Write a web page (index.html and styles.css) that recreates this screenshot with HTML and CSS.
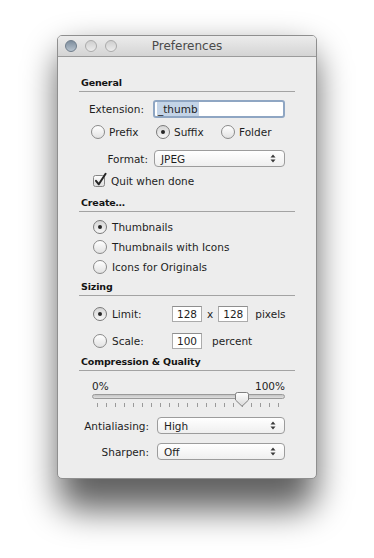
FILE: index.html
```html
<!DOCTYPE html>
<html lang="en">
<head>
  <meta charset="UTF-8" />
  <meta name="viewport" content="width=device-width, initial-scale=1.0"/>
  <title>Preferences</title>
  <link rel="stylesheet" href="styles.css">
</head>
<body>
  <div class="window">
    <div class="titlebar">
      <div class="lights">
        <span class="light close"></span>
        <span class="light"></span>
        <span class="light"></span>
      </div>
      <div class="title">Preferences</div>
      <div></div>
    </div>

    <div class="content">
      <div class="section-head">General</div>

      <div class="row row-ext">
        <span class="lbl lbl-ext">Extension:</span>
        <div class="field focused"><span class="sel">_thumb</span></div>
      </div>

      <div class="row row-radios">
        <span class="opt"><span class="radio"></span>Prefix</span>
        <span class="opt"><span class="radio on"></span>Suffix</span>
        <span class="opt"><span class="radio"></span>Folder</span>
      </div>

      <div class="row row-format">
        <span class="lbl lbl-format">Format:</span>
        <div class="popup popup-format">
          <span>JPEG</span>
          <svg class="arrows" width="6" height="9" viewBox="0 0 6 9"><path d="M0.5 3.6 L3 0.6 L5.5 3.6 Z M0.5 5.4 L3 8.4 L5.5 5.4 Z" fill="#3a3a3a"/></svg>
        </div>
      </div>

      <div class="row row-check">
        <svg class="check" width="16" height="16" viewBox="0 0 16 16">
          <defs>
            <linearGradient id="cb" x1="0" y1="0" x2="0" y2="1">
              <stop offset="0" stop-color="#ffffff"/>
              <stop offset="1" stop-color="#dcdcdc"/>
            </linearGradient>
          </defs>
          <rect x="1.5" y="3.5" width="11" height="11" rx="2" fill="url(#cb)" stroke="#858585"/>
          <path d="M4 8.8 L6.8 12.3 L13.6 1.8" fill="none" stroke="#262626" stroke-width="2" stroke-linecap="round" stroke-linejoin="round"/>
        </svg>
        <span>Quit when done</span>
      </div>

      <div class="section-head head-create">Create…</div>

      <div class="row row-create first">
        <span class="radio on"></span>Thumbnails
      </div>
      <div class="row row-create">
        <span class="radio"></span>Thumbnails with Icons
      </div>
      <div class="row row-create">
        <span class="radio"></span>Icons for Originals
      </div>

      <div class="section-head head-sizing">Sizing</div>

      <div class="row row-size row-limit">
        <span class="size-opt"><span class="radio on"></span>Limit:</span>
        <div class="field num">128</div>
        <span class="times">x</span>
        <div class="field num">128</div>
        <span class="unit">pixels</span>
      </div>

      <div class="row row-size row-scale">
        <span class="size-opt"><span class="radio"></span>Scale:</span>
        <div class="field num">100</div>
        <span class="unit unit-pct">percent</span>
      </div>

      <div class="section-head head-quality">Compression &amp; Quality</div>

      <div class="slider">
        <div class="slider-labels"><span>0%</span><span>100%</span></div>
        <div class="track-wrap">
          <div class="track"></div>
          <svg class="knob" width="14" height="15" viewBox="0 0 14 15">
            <defs>
              <linearGradient id="kn" x1="0" y1="0" x2="0" y2="1">
                <stop offset="0" stop-color="#ffffff"/>
                <stop offset="1" stop-color="#d9d9d9"/>
              </linearGradient>
            </defs>
            <path d="M2.5 0.5 H11.5 Q13.5 0.5 13.5 2.5 V8 L7 14.3 L0.5 8 V2.5 Q0.5 0.5 2.5 0.5 Z" fill="url(#kn)" stroke="#7f7f7f"/>
          </svg>
          <div class="ticks">
            <i></i><i></i><i></i><i></i><i></i><i></i><i></i>
            <i></i><i></i><i></i><i></i><i></i><i></i><i></i>
            <i></i><i></i><i></i><i></i><i></i><i></i><i></i>
          </div>
        </div>
      </div>

      <div class="row row-aa">
        <span class="lbl lbl-aa">Antialiasing:</span>
        <div class="popup popup-aa">
          <span>High</span>
          <svg class="arrows" width="6" height="9" viewBox="0 0 6 9"><path d="M0.5 3.6 L3 0.6 L5.5 3.6 Z M0.5 5.4 L3 8.4 L5.5 5.4 Z" fill="#3a3a3a"/></svg>
        </div>
      </div>

      <div class="row row-sharpen">
        <span class="lbl lbl-aa">Sharpen:</span>
        <div class="popup popup-aa">
          <span>Off</span>
          <svg class="arrows" width="6" height="9" viewBox="0 0 6 9"><path d="M0.5 3.6 L3 0.6 L5.5 3.6 Z M0.5 5.4 L3 8.4 L5.5 5.4 Z" fill="#3a3a3a"/></svg>
        </div>
      </div>
    </div>
  </div>
</body>
</html>
```

FILE: styles.css
```css
html, body {
  height: 100%;
}

body {
  margin: 0;
  padding: 35px 0 0 57px;
  box-sizing: border-box;
  background: #fff;
  font-family: "DejaVu Sans", sans-serif;
  font-size: 10.5px;
  color: #1e1e1e;
}

.window {
  position: relative;
  width: 260px;
  box-sizing: border-box;
  background-color: #ededed;
  border: 1px solid #8f8f8f;
  border-radius: 5px;
}

/* soft drop shadow under the window */
.window::before {
  content: "";
  position: absolute;
  left: 0;
  right: 0;
  top: 14px;
  bottom: -32px;
  z-index: -1;
  background: rgba(0,0,0,0.62);
  border-radius: 20px;
  filter: blur(17px);
}

.titlebar {
  height: 20px;
  display: grid;
  grid-template-columns: 1fr auto 1fr;
  align-items: center;
  background: linear-gradient(#ececec, #d4d4d4);
  border-bottom: 1px solid #9b9b9b;
  border-radius: 4px 4px 0 0;
}

.lights {
  display: flex;
  gap: 8px;
  padding-left: 7px;
}

.light {
  width: 12px;
  height: 12px;
  box-sizing: border-box;
  border-radius: 50%;
  border: 1px solid #ababab;
  background: linear-gradient(#cfcfcf, #ececec);
}

.light.close {
  border-color: #6f7d8b;
  background: linear-gradient(#7d8d9d, #b7c3ce);
}

.title {
  font-size: 12px;
  color: #4a4a4a;
  line-height: 20px;
}

.content {
  padding: 18px 21px 18px 21px;
}

.section-head {
  height: 16px;
  line-height: 16px;
  padding-left: 2px;
  font-weight: bold;
  font-size: 9.5px;
  letter-spacing: -0.15px;
  border-bottom: 1px solid #a3a3a3;
  color: #141414;
}

.row {
  display: flex;
  align-items: center;
}

.lbl {
  text-align: right;
  flex: none;
}

/* General */
.row-ext {
  margin-top: 8px;
  height: 18px;
}

.lbl-ext {
  width: 65px;
  margin-right: 9px;
}

.field {
  box-sizing: border-box;
  background: #fff;
  border: 1px solid #ababab;
  border-top-color: #8f8f8f;
}

.field.focused {
  width: 132px;
  height: 18px;
  border: 2px solid #8fa6c3;
  border-radius: 3px;
  padding: 0 2px;
  display: flex;
  align-items: center;
}

.sel {
  background: #c4d4e7;
  line-height: 14px;
  padding: 0 1px;
}

.row-radios {
  margin-top: 7px;
  height: 14px;
  padding-left: 12px;
}

.opt {
  width: 65px;
  display: flex;
  align-items: center;
}

.radio {
  width: 14px;
  height: 14px;
  box-sizing: border-box;
  flex: none;
  border-radius: 50%;
  border: 1px solid #8a8a8a;
  background: linear-gradient(#ffffff, #e2e2e2);
  margin-right: 4px;
  display: flex;
  align-items: center;
  justify-content: center;
}

.radio.on {
  background: linear-gradient(#d6d6d6, #f6f6f6);
  border-color: #7a7a7a;
}

.radio.on::after {
  content: "";
  width: 4px;
  height: 4px;
  border-radius: 50%;
  background: #262626;
}

.row-format {
  margin-top: 11px;
  height: 17px;
}

.lbl-format {
  width: 69px;
  margin-right: 6px;
}

.popup {
  box-sizing: border-box;
  height: 17px;
  display: flex;
  align-items: center;
  justify-content: space-between;
  padding: 0 8px 0 6px;
  border: 1px solid #9c9c9c;
  border-radius: 4px;
  background: linear-gradient(#ffffff, #efefef);
}

.popup-format {
  width: 131px;
}

.popup-aa {
  width: 128px;
}

.row-check {
  margin-top: 7px;
  height: 14px;
  padding-left: 13px;
}

.check {
  flex: none;
  margin: -2px 3px 0 0;
}

/* Create */
.head-create {
  margin-top: 7px;
}

.row-create {
  margin-top: 6px;
  height: 14px;
  padding-left: 14px;
}

.row-create.first {
  margin-top: 8px;
}

.row-create .radio {
  margin-right: 5px;
}

/* Sizing */
.head-sizing {
  margin-top: 5px;
}

.row-size {
  height: 16px;
  padding-left: 14px;
}

.row-limit {
  margin-top: 10px;
}

.row-scale {
  margin-top: 11px;
}

.size-opt {
  width: 79px;
  display: flex;
  align-items: center;
}

.size-opt .radio {
  margin-right: 5px;
}

.field.num {
  width: 30px;
  height: 16px;
  line-height: 14px;
  padding-left: 4px;
}

.times {
  margin: 0 5px;
}

.unit {
  margin-left: 7px;
}

.unit.unit-pct {
  margin-left: 10px;
}

/* Compression */
.head-quality {
  margin-top: 5px;
}

.slider {
  padding: 0 10px 0 13px;
}

.slider-labels {
  margin-top: 9px;
  height: 12px;
  line-height: 12px;
  display: flex;
  justify-content: space-between;
}

.track-wrap {
  position: relative;
  margin-top: 2px;
}

.track {
  height: 5px;
  box-sizing: border-box;
  border: 1px solid #9a9a9a;
  border-radius: 3px;
  background: linear-gradient(#c4c4c4, #e0e0e0);
}

.knob {
  position: absolute;
  left: 143px;
  top: -2px;
}

.ticks {
  margin: 4px 6px 0 5px;
  height: 4px;
  display: flex;
  justify-content: space-between;
}

.ticks i {
  width: 1px;
  height: 4px;
  background: #9a9a9a;
}

.row-aa {
  margin-top: 10px;
  height: 17px;
}

.row-sharpen {
  margin-top: 9px;
  height: 17px;
}

.lbl-aa {
  width: 70px;
  margin-right: 8px;
}
```
